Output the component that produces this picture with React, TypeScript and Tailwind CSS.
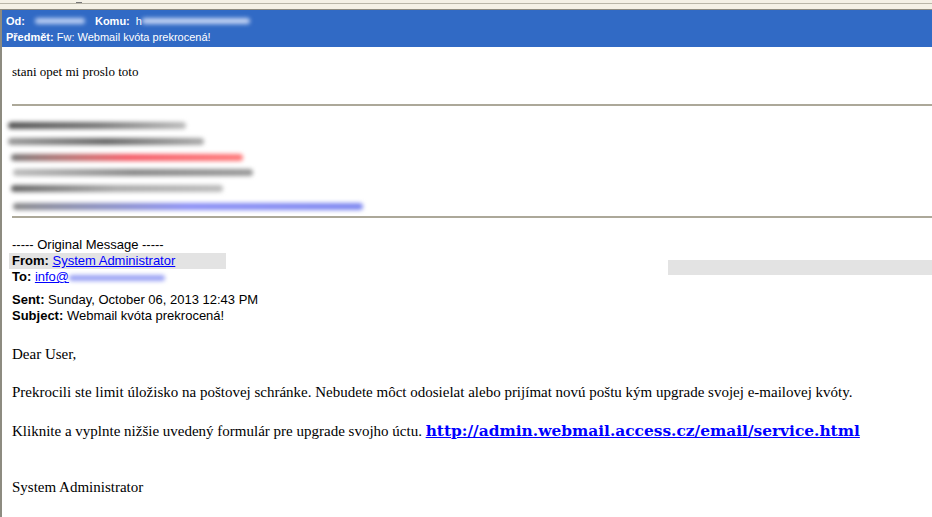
const sans = { fontFamily: "'Liberation Sans', Arial, sans-serif" };

// blurred smudge standing in for redacted text
function Smudge({ w, color, className = "" }: { w: number; color: string; className?: string }) {
  return (
    <span
      className={`inline-block h-[6px] rounded-full blur-[2px] align-middle ${color} ${className}`}
      style={{ width: w }}
    />
  );
}

const SIG = [
  { ml: 6, w: 178, color: "bg-gradient-to-r from-[#555] via-[#777] to-[#bbb]", mt: 16 },
  { ml: 6, w: 196, color: "bg-gradient-to-r from-[#999] via-[#666] to-[#aaa]", mt: 9 },
  { ml: 9, w: 232, color: "bg-gradient-to-r from-[#777] via-[#f45a66] to-[#f77]", mt: 9 },
  { ml: 11, w: 240, color: "bg-gradient-to-r from-[#bbb] via-[#888] to-[#999]", mt: 8 },
  { ml: 9, w: 212, color: "bg-gradient-to-r from-[#666] via-[#aaa] to-[#bbb]", mt: 9 },
  { ml: 11, w: 350, color: "bg-gradient-to-r from-[#888] via-[#8a8ef5] to-[#7c86f0]", mt: 11 },
];

export default function App() {
  return (
    <div className="w-[932px] h-[517px] overflow-hidden bg-white relative">
      {/* window chrome strip */}
      <div className="h-[10px] bg-[#f4f1e6] border-b border-[#8d8b80] relative">
        <div className="absolute left-0 right-0 top-[3px] h-px bg-[#b9b6a8]" />
        <div className="absolute left-[76px] top-[2px] w-[6px] h-px bg-[#777]" />
      </div>

      <div className="border-l-2 border-[#8d8b80] h-full">
        {/* header */}
        <div className="bg-[#316ac5] text-white text-[11px] leading-[16px] pl-[4px] pt-[3px] pb-[2px]" style={sans}>
          <div className="flex items-center">
            <b>Od:</b>
            <Smudge w={50} color="bg-[#b9cdf2]" className="ml-[10px]" />
            <b className="ml-[10px]">Komu:</b>
            <span className="ml-[6px]">h</span>
            <Smudge w={108} color="bg-[#c3d3f3]" />
          </div>
          <div>
            <b>Předmět:</b> Fw: Webmail kvóta prekrocená!
          </div>
        </div>

        {/* body */}
        <div className="pl-[10px] text-black" style={{ fontFamily: "'Liberation Serif', 'Times New Roman', serif" }}>
          <p className="mt-[17px] text-[13px] leading-[16px]">stani opet mi proslo toto</p>

          <div className="mt-[24px] h-[2px] bg-[#aca899]" />

          {/* redacted signature */}
          <div className="h-[110px] -ml-[10px] flex flex-col">
            {SIG.map((s, i) => (
              <div key={i} className={`h-[7px] rounded-full blur-[2px] ${s.color}`} style={{ marginLeft: s.ml, width: s.w, marginTop: s.mt }} />
            ))}
          </div>

          <div className="h-[2px] bg-[#aca899]" />

          {/* quoted header */}
          <div className="text-[13px] leading-[16px]" style={sans}>
            <p className="mt-[19px]">----- Original Message -----</p>
            <p className="bg-[#e3e3e3] w-[217px] -ml-[3px] pl-[3px]">
              <b>From:</b> <a className="text-[#0000ff] underline">System Administrator</a>
            </p>
            <p>
              <b>To:</b>{" "}
              <a className="text-[#0000ff] underline">
                info@
                <Smudge w={96} color="bg-[#9aa2f4]" />
              </a>
            </p>
            <p className="mt-[7px]">
              <b>Sent:</b> Sunday, October 06, 2013 12:43 PM
            </p>
            <p>
              <b>Subject:</b> Webmail kvóta prekrocená!
            </p>
          </div>

          <p className="mt-[21px] text-[15px] leading-[18px]">Dear User,</p>
          <p className="mt-[20px] text-[15px] leading-[18px]">
            Prekrocili ste limit úložisko na poštovej schránke. Nebudete môct odosielat alebo prijímat novú poštu kým upgrade svojej e-mailovej kvóty.
          </p>
          <p className="mt-[21px] text-[15px] leading-[18px]">
            Kliknite a vyplnte nižšie uvedený formulár pre upgrade svojho úctu.{" "}
            <a
              className="text-[#0000ff] underline font-bold text-[15.4px] leading-none"
              style={{ fontFamily: "'DejaVu Serif', serif" }}
            >
              http://admin.webmail.access.cz/email/service.html
            </a>
          </p>
          <p className="mt-[38px] text-[15px] leading-[18px]">System Administrator</p>
        </div>
      </div>

      {/* stray highlight bar on the right */}
      <div className="absolute left-[668px] top-[260px] w-[264px] h-[15px] bg-[#e3e3e3]" />
    </div>
  );
}
